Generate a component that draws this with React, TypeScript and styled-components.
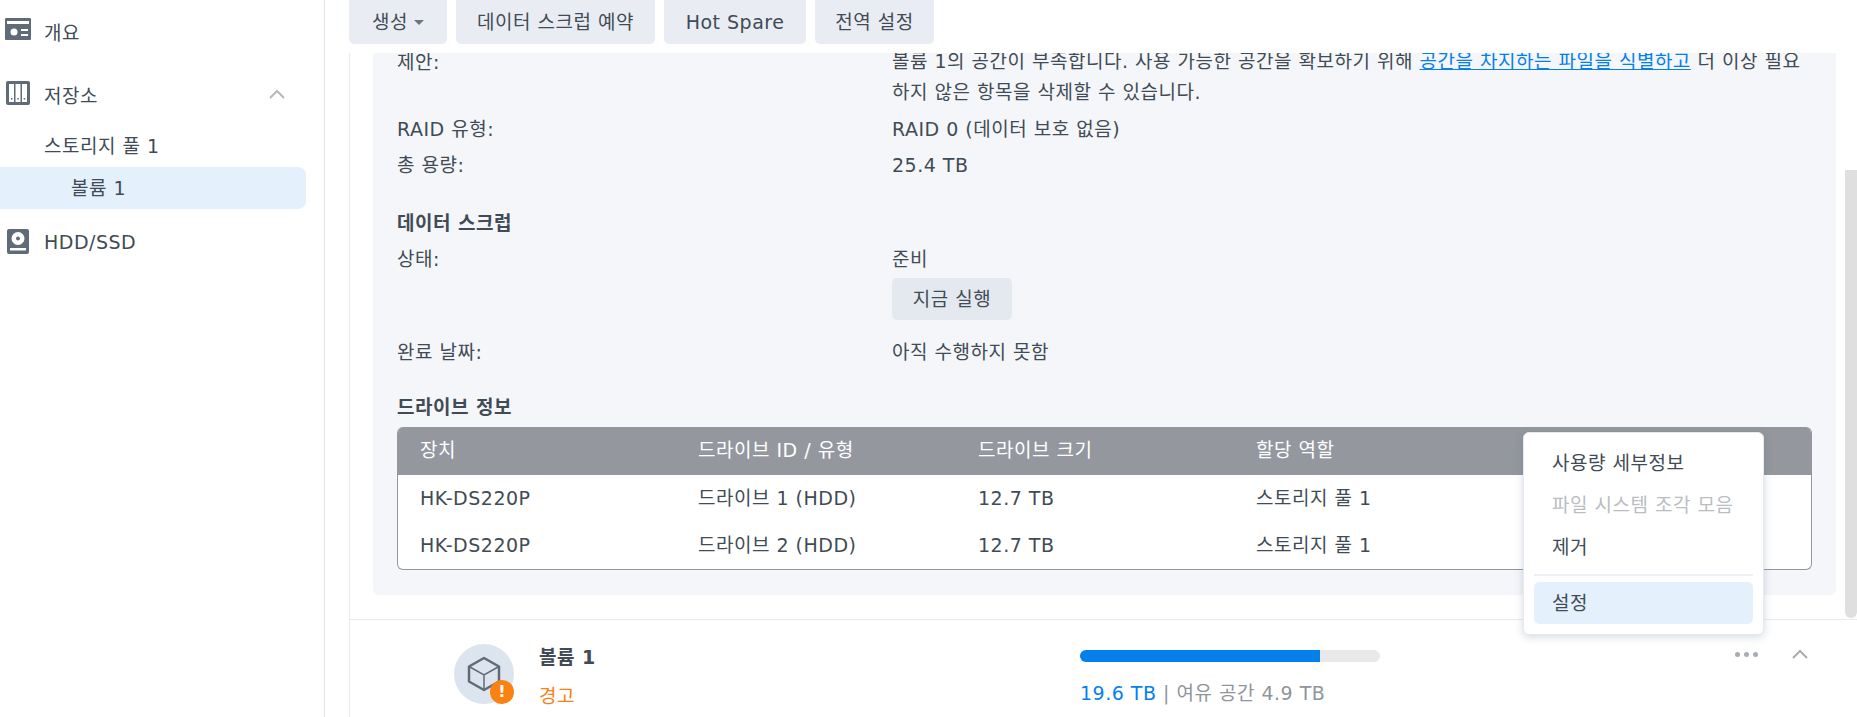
import React from 'react';
import styled, { createGlobalStyle } from 'styled-components';

const textColor = '#414b55';
const fontStack = `"DejaVu Sans", "Noto Sans CJK KR", sans-serif`;

const GlobalStyle = createGlobalStyle`
  html, body {
    margin: 0;
    padding: 0;
    background: #ffffff;
    font-family: ${fontStack};
    color: ${textColor};
  }
`;

const Page = styled.div`
  display: flex;
  width: 1857px;
  height: 717px;
  overflow: hidden;
  position: relative;
  font-size: 19px;
  letter-spacing: 0.5px;
`;

const Sidebar = styled.nav`
  width: 324px;
  flex: none;
  border-right: 1px solid #dfe6ee;
  box-sizing: content-box;
  padding-top: 10px;
`;

const NavRow = styled.div<{ $gap?: number }>`
  display: flex;
  align-items: center;
  height: 42px;
  padding-left: 4px;
  gap: 12px;
  margin-top: ${(p) => p.$gap ?? 0}px;
  width: 306px;
  box-sizing: border-box;
`;

const NavIcon = styled.svg`
  width: 28px;
  height: 28px;
  flex: none;
  color: #5f6b78;
`;

const NavChevron = styled.svg`
  width: 18px;
  height: 18px;
  margin-left: auto;
  margin-right: 20px;
  color: #b4b9be;
`;

const SubRow = styled.div<{ $active?: boolean; $depth: number }>`
  height: 42px;
  width: 306px;
  line-height: 42px;
  box-sizing: border-box;
  padding-left: ${(p) => p.$depth}px;
  background: ${(p) => (p.$active ? '#e4f0fc' : 'transparent')};
  border-radius: 0 8px 8px 0;
`;

const SubList = styled.div`
  margin-top: 10px;
`;

const Main = styled.main`
  flex: 1;
  min-width: 0;
  display: flex;
  flex-direction: column;
  position: relative;
`;

const Toolbar = styled.div`
  height: 53px;
  flex: none;
  display: flex;
  gap: 9px;
  padding-left: 24px;
`;

const ToolButton = styled.button<{ $w: number }>`
  width: ${(p) => p.$w}px;
  height: 44px;
  border: 0;
  border-radius: 0 0 5px 5px;
  background: #e9edf3;
  color: ${textColor};
  font: inherit;
  letter-spacing: inherit;
  line-height: 42px;
  padding: 0;
  display: inline-flex;
  align-items: center;
  justify-content: center;
  gap: 6px;
`;

const Caret = styled.span`
  width: 0;
  height: 0;
  border-left: 5px solid transparent;
  border-right: 5px solid transparent;
  border-top: 5px solid #6c7580;
`;

const Scroller = styled.div`
  flex: 1;
  margin-left: 24px;
  border-left: 1px solid #e6ebf1;
  overflow: hidden;
  min-height: 0;
`;

const DetailPanel = styled.section`
  margin-left: 23px;
  margin-right: 21px;
  height: 543px;
  box-sizing: border-box;
  background: #f4f6fa;
  border-radius: 0 0 6px 6px;
  padding: 0 24px 0 24px;
  margin-top: -1px;
`;

const InfoRow = styled.div<{ $h: number; $top?: number }>`
  display: grid;
  grid-template-columns: 495px 1fr;
  min-height: ${(p) => p.$h}px;
  margin-top: ${(p) => p.$top ?? 0}px;
  line-height: 36px;
`;

const ClippedLabel = styled.span`
  margin-top: -8px;
`;

const Paragraph = styled.div`
  line-height: 31px;
  margin-top: -6px;
  white-space: nowrap;
`;

const Link = styled.a`
  color: #057feb;
  text-decoration: underline;
`;

const SectionTitle = styled.h3<{ $top: number }>`
  margin: ${(p) => p.$top}px 0 0;
  font-size: 19px;
  font-weight: 700;
  line-height: 36px;
`;

const RunButton = styled.button`
  display: block;
  width: 120px;
  height: 42px;
  margin-top: 1px;
  border: 0;
  border-radius: 5px;
  background: #e4e9f0;
  color: ${textColor};
  font: inherit;
  letter-spacing: inherit;
`;

const DriveTable = styled.div`
  border: 1px solid #94989e;
  border-top: 0;
  border-radius: 6px;
  overflow: hidden;
  background: #ffffff;
  height: 143px;
  box-sizing: border-box;
  margin-top: 2px;
`;

const DriveRow = styled.div<{ $head?: boolean }>`
  display: grid;
  grid-template-columns: 278px 280px 278px 1fr;
  height: ${(p) => (p.$head ? 48 : 47)}px;
  line-height: ${(p) => (p.$head ? 46 : 47)}px;
  padding-left: 22px;
  background: ${(p) => (p.$head ? '#94989e' : 'transparent')};
  color: ${(p) => (p.$head ? '#ffffff' : textColor)};
`;

const VolumeRow = styled.div`
  margin-top: 24px;
  border-top: 1px solid #e6ebf1;
  display: flex;
  height: 100px;
  box-sizing: border-box;
  padding: 24px 0 0 104px;
`;

const VolumeBadge = styled.div`
  width: 60px;
  height: 60px;
  border-radius: 50%;
  background: #dce4ed;
  position: relative;
  display: flex;
  align-items: center;
  justify-content: center;
  flex: none;
`;

const WarnDot = styled.span`
  position: absolute;
  right: 0;
  bottom: 0;
  width: 24px;
  height: 24px;
  border-radius: 50%;
  background: #f98213;
  color: #ffffff;
  font-size: 16px;
  font-weight: 700;
  letter-spacing: 0;
  line-height: 24px;
  text-align: center;
`;

const VolumeName = styled.div`
  margin-left: 25px;
  width: 541px;
  flex: none;
`;

const VolumeTitle = styled.div`
  font-weight: 700;
  line-height: 24px;
  margin-top: 1px;
`;

const WarnText = styled.div`
  color: #f98213;
  line-height: 24px;
  margin-top: 15px;
`;

const Usage = styled.div`
  width: 300px;
  flex: none;
`;

const Bar = styled.div`
  height: 12px;
  margin-top: 6px;
  background: #e8e9eb;
  border-radius: 6px;
  overflow: hidden;
`;

const BarFill = styled.div`
  height: 100%;
  background: #057feb;
`;

const UsageText = styled.div`
  margin-top: 19px;
  line-height: 24px;
  color: #8f959c;
  white-space: nowrap;
`;

const UsedValue = styled.span`
  color: #057feb;
`;

const RowActions = styled.div`
  margin-left: auto;
  margin-right: 49px;
  display: flex;
  align-items: flex-start;
  gap: 34px;
  padding-top: 3px;
`;

const Dots = styled.div`
  display: flex;
  gap: 4px;
  padding-top: 5px;
`;

const Dot = styled.span`
  width: 5px;
  height: 5px;
  border-radius: 50%;
  background: #a9adb3;
`;

const Menu = styled.div`
  position: absolute;
  left: 1198px;
  top: 432px;
  width: 241px;
  height: 203px;
  box-sizing: border-box;
  background: #ffffff;
  border: 1px solid #e6ebf1;
  border-radius: 6px;
  box-shadow: 0 2px 8px rgba(60, 80, 105, 0.22);
  padding: 9px 10px;
`;

const MenuItem = styled.div<{ $disabled?: boolean; $active?: boolean }>`
  height: 42px;
  line-height: 42px;
  padding-left: 18px;
  border-radius: 5px;
  white-space: nowrap;
  color: ${(p) => (p.$disabled ? '#babdc2' : textColor)};
  background: ${(p) => (p.$active ? '#e4f0fc' : 'transparent')};
`;

const MenuDivider = styled.div`
  height: 2px;
  margin: 6px 0;
  background: #eceff3;
`;

const ScrollThumb = styled.div`
  position: absolute;
  right: 0;
  top: 170px;
  width: 12px;
  height: 448px;
  background: #dfdfdf;
  border-radius: 0 0 6px 6px;
`;

const App: React.FC = () => {
  return (
    <>
      <GlobalStyle />
      <Page>
        <Sidebar>
          <NavRow>
            <NavIcon viewBox="0 0 28 28">
              <path fill="currentColor" fillRule="evenodd" d="M2 1h24a1 1 0 0 1 1 1v20a1 1 0 0 1-1 1H2a1 1 0 0 1-1-1V2a1 1 0 0 1 1-1zm1 3v3h22V4zm7 7.500a3.500 3.500 0 1 0 0 7 3.500 3.500 0 0 0 0-7zM17 12v2h7v-2zm0 5v2h7v-2z" />
            </NavIcon>
            개요
          </NavRow>
          <NavRow $gap={21}>
            <NavIcon viewBox="0 0 28 28">
              <path fill="currentColor" fillRule="evenodd" d="M4 1h20a2 2 0 0 1 2 2v20a2 2 0 0 1-2 2H4a2 2 0 0 1-2-2V3a2 2 0 0 1 2-2zm1 3v18h5V4zm6.500 0v18h5V4zM18 4v18h5V4z" />
              <path fill="currentColor" d="M7 18h1.500v1.500H7zM13.300 18h1.500v1.500h-1.500zM19.700 18h1.500v1.500h-1.500z" />
            </NavIcon>
            저장소
            <NavChevron viewBox="0 0 18 18" fill="none" stroke="currentColor" strokeWidth="2">
              <path d="M2 13l7-7 7 7" />
            </NavChevron>
          </NavRow>
          <SubList>
            <SubRow $depth={44}>스토리지 풀 1</SubRow>
            <SubRow $depth={71} $active>볼륨 1</SubRow>
          </SubList>
          <NavRow $gap={12}>
            <NavIcon viewBox="0 0 28 28">
              <path fill="currentColor" fillRule="evenodd" d="M5 1h18a2 2 0 0 1 2 2v21a2 2 0 0 1-2 2H5a2 2 0 0 1-2-2V3a2 2 0 0 1 2-2zm9 3a6.500 6.500 0 1 0 0 13 6.500 6.500 0 0 0 0-13zm0 4.500a2 2 0 1 1 0 4 2 2 0 0 1 0-4zM6 20v2.500h16V20z" />
            </NavIcon>
            HDD/SSD
          </NavRow>
        </Sidebar>
        <Main>
          <Toolbar>
            <ToolButton $w={98}>생성<Caret /></ToolButton>
            <ToolButton $w={199}>데이터 스크럽 예약</ToolButton>
            <ToolButton $w={142}>Hot Spare</ToolButton>
            <ToolButton $w={119}>전역 설정</ToolButton>
          </Toolbar>
          <Scroller>
            <DetailPanel>
              <InfoRow $h={59}>
                <ClippedLabel>제안:</ClippedLabel>
                <Paragraph>
                  볼륨 1의 공간이 부족합니다. 사용 가능한 공간을 확보하기 위해 <Link>공간을 차지하는 파일을 식별하고</Link> 더 이상 필요
                  <br />
                  하지 않은 항목을 삭제할 수 있습니다.
                </Paragraph>
              </InfoRow>
              <InfoRow $h={36}>
                <span>RAID 유형:</span>
                <span>RAID 0 (데이터 보호 없음)</span>
              </InfoRow>
              <InfoRow $h={36}>
                <span>총 용량:</span>
                <span>25.4 TB</span>
              </InfoRow>
              <SectionTitle $top={22}>데이터 스크럽</SectionTitle>
              <InfoRow $h={80}>
                <span>상태:</span>
                <div>
                  준비
                  <RunButton>지금 실행</RunButton>
                </div>
              </InfoRow>
              <InfoRow $h={36} $top={13}>
                <span>완료 날짜:</span>
                <span>아직 수행하지 못함</span>
              </InfoRow>
              <SectionTitle $top={19}>드라이브 정보</SectionTitle>
              <DriveTable>
                <DriveRow $head>
                  <span>장치</span>
                  <span>드라이브 ID / 유형</span>
                  <span>드라이브 크기</span>
                  <span>할당 역할</span>
                </DriveRow>
                <DriveRow>
                  <span>HK-DS220P</span>
                  <span>드라이브 1 (HDD)</span>
                  <span>12.7 TB</span>
                  <span>스토리지 풀 1</span>
                </DriveRow>
                <DriveRow>
                  <span>HK-DS220P</span>
                  <span>드라이브 2 (HDD)</span>
                  <span>12.7 TB</span>
                  <span>스토리지 풀 1</span>
                </DriveRow>
              </DriveTable>
            </DetailPanel>
            <VolumeRow>
              <VolumeBadge>
                <svg width="34" height="36" viewBox="0 0 34 36" fill="none" stroke="#5f6b78">
                  <path strokeWidth="2.5" strokeLinejoin="round" d="M17 2l15 8.500v15L17 34 2 25.500v-15z" />
                  <path strokeWidth="1.500" d="M2 10.500L17 19l15-8.500M17 19v15" />
                </svg>
                <WarnDot>!</WarnDot>
              </VolumeBadge>
              <VolumeName>
                <VolumeTitle>볼륨 1</VolumeTitle>
                <WarnText>경고</WarnText>
              </VolumeName>
              <Usage>
                <Bar>
                  <BarFill style={{ width: '80%' }} />
                </Bar>
                <UsageText>
                  <UsedValue>19.6 TB</UsedValue> | 여유 공간 4.9 TB
                </UsageText>
              </Usage>
              <RowActions>
                <Dots>
                  <Dot />
                  <Dot />
                  <Dot />
                </Dots>
                <svg width="16" height="16" viewBox="0 0 16 16" fill="none" stroke="#a9adb3" strokeWidth="2">
                  <path d="M1 11l7-7 7 7" />
                </svg>
              </RowActions>
            </VolumeRow>
          </Scroller>
          <ScrollThumb />
          <Menu>
            <MenuItem>사용량 세부정보</MenuItem>
            <MenuItem $disabled>파일 시스템 조각 모음</MenuItem>
            <MenuItem>제거</MenuItem>
            <MenuDivider />
            <MenuItem $active>설정</MenuItem>
          </Menu>
        </Main>
      </Page>
    </>
  );
};

export default App;
